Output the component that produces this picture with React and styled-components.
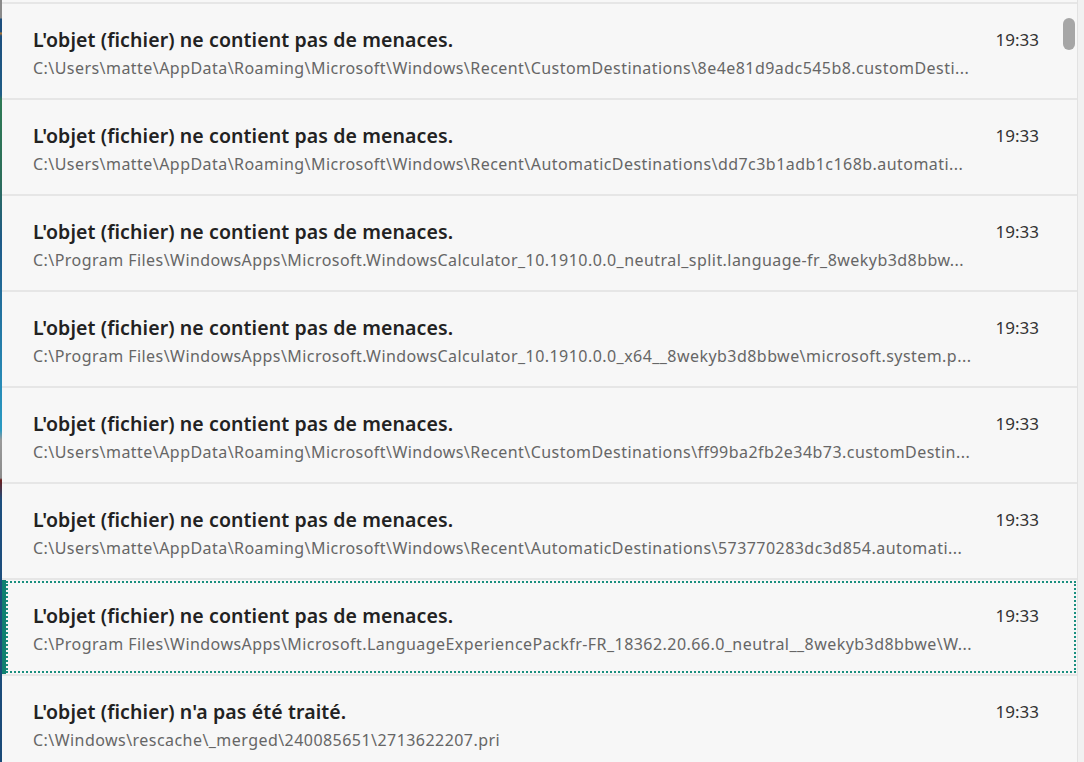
import React from "react";
import styled, { createGlobalStyle } from "styled-components";

const Global = createGlobalStyle`
  html, body { margin: 0; padding: 0; height: 100%; overflow: hidden; }
  body { font-family: "Noto Sans", "Open Sans", sans-serif; background: #f7f7f7; }
  #root { height: 100%; }
`;

const Screen = styled.div`
  display: flex;
  width: 1084px;
  height: 762px;
  overflow: hidden;
`;

const Desktop = styled.div`
  width: 2px;
  flex: none;
  background: linear-gradient(
    #8a8a8a 0px, #8a8a8a 18px, #1d4f7e 19px, #1d4f7e 32px, #c0782a 33px, #1d4f7e 36px,
    #1f5d86 95px, #2f7a55 100px, #2d6e5a 180px, #1e5a88 240px, #2789b5 380px,
    #2a9ac2 430px, #9a9a9a 440px, #8c8c8c 478px, #6b1f1f 480px, #1d4f7e 500px,
    #1a4a78 762px
  );
`;

const Panel = styled.div`
  position: relative;
  flex: 1;
  display: flex;
  flex-direction: column;
  padding-top: 2px;
  background: #f7f7f7;
  border-right: 1px solid #e2e2e2;
  overflow: hidden;
`;

const Edge = styled.div`
  width: 6px;
  flex: none;
  background: #f1f1f1;
`;

const Item = styled.div`
  position: relative;
  flex: none;
  display: flex;
  align-items: flex-start;
  gap: 22px;
  padding: 24px 38px 0 31px;
  box-sizing: border-box;
  height: 96px;
  border-top: 2px solid #e6e6e6;
  background: #f7f7f7;
`;

const FocusRing = styled.div`
  position: absolute;
  left: 4px;
  right: 1px;
  top: 1px;
  bottom: 1px;
  border: 2px dotted #1a8f7f;
  pointer-events: none;
  &::before {
    content: "";
    position: absolute;
    left: -6px;
    top: -3px;
    bottom: -3px;
    width: 4px;
    background: #0f7f70;
  }
`;

const Body = styled.div`
  flex: 1;
  min-width: 0;
  display: flex;
  flex-direction: column;
`;

const Title = styled.div`
  font-size: 19.5px;
  line-height: 24px;
  font-weight: 600;
  color: #222;
  letter-spacing: 0.1px;
  white-space: nowrap;
`;

const Path = styled.div`
  margin-top: 6px;
  font-size: 16px;
  line-height: 20px;
  color: #666;
  white-space: nowrap;
  overflow: hidden;
  text-overflow: ellipsis;
  letter-spacing: 0.45px;
`;

const Time = styled.div`
  flex: none;
  font-size: 17px;
  line-height: 24px;
  color: #333;
`;

const Thumb = styled.div`
  position: absolute;
  top: 18px;
  right: 2px;
  width: 12px;
  height: 32px;
  border-radius: 6px;
  background: #a6a6a6;
`;

const items = [
  {
    title: "L'objet (fichier) ne contient pas de menaces.",
    path: "C:\\Users\\matte\\AppData\\Roaming\\Microsoft\\Windows\\Recent\\CustomDestinations\\8e4e81d9adc545b8.customDesti...",
  },
  {
    title: "L'objet (fichier) ne contient pas de menaces.",
    path: "C:\\Users\\matte\\AppData\\Roaming\\Microsoft\\Windows\\Recent\\AutomaticDestinations\\dd7c3b1adb1c168b.automati...",
  },
  {
    title: "L'objet (fichier) ne contient pas de menaces.",
    path: "C:\\Program Files\\WindowsApps\\Microsoft.WindowsCalculator_10.1910.0.0_neutral_split.language-fr_8wekyb3d8bbw...",
  },
  {
    title: "L'objet (fichier) ne contient pas de menaces.",
    path: "C:\\Program Files\\WindowsApps\\Microsoft.WindowsCalculator_10.1910.0.0_x64__8wekyb3d8bbwe\\microsoft.system.p...",
  },
  {
    title: "L'objet (fichier) ne contient pas de menaces.",
    path: "C:\\Users\\matte\\AppData\\Roaming\\Microsoft\\Windows\\Recent\\CustomDestinations\\ff99ba2fb2e34b73.customDestin...",
  },
  {
    title: "L'objet (fichier) ne contient pas de menaces.",
    path: "C:\\Users\\matte\\AppData\\Roaming\\Microsoft\\Windows\\Recent\\AutomaticDestinations\\573770283dc3d854.automati...",
  },
  {
    title: "L'objet (fichier) ne contient pas de menaces.",
    path: "C:\\Program Files\\WindowsApps\\Microsoft.LanguageExperiencePackfr-FR_18362.20.66.0_neutral__8wekyb3d8bbwe\\W...",
    focused: true,
  },
  {
    title: "L'objet (fichier) n'a pas été traité.",
    path: "C:\\Windows\\rescache\\_merged\\240085651\\2713622207.pri",
  },
];

export default function App() {
  return (
    <>
      <Global />
      <Screen>
        <Desktop />
        <Panel>
          {items.map((it, i) => (
            <Item key={i}>
              {it.focused && <FocusRing />}
              <Body>
                <Title>{it.title}</Title>
                <Path>{it.path}</Path>
              </Body>
              <Time>19:33</Time>
            </Item>
          ))}
          <Thumb />
        </Panel>
        <Edge />
      </Screen>
    </>
  );
}
